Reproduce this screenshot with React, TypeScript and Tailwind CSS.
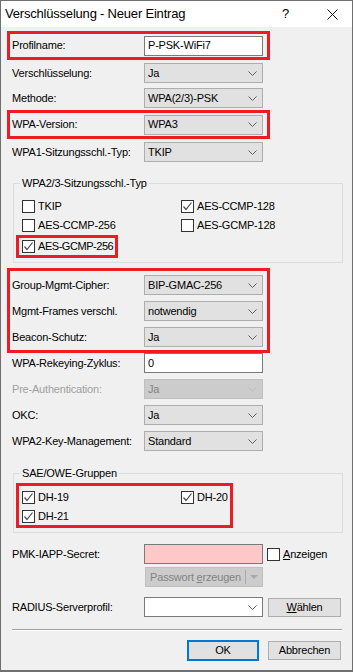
import React from 'react';

const RED = 'border-[3px] border-[#ec1c24]';
const NORED = 'border-[3px] border-transparent';

const Chevron = ({ disabled }: { disabled?: boolean }) => (
	<svg width="9" height="5" viewBox="0 0 9 5" className="shrink-0">
		<polyline points="0.5,0.5 4.5,4.5 8.5,0.5" fill="none" stroke={disabled ? '#bdbdbd' : '#606060'} strokeWidth="1" />
	</svg>
);

const Select = ({ value, disabled, white }: { value: string; disabled?: boolean; white?: boolean }) => (
	<div
		className={`w-[119px] h-[20px] flex items-center justify-between border pl-[3px] pr-[5px] ${
			disabled ? 'bg-[#cccccc] border-[#bfbfbf] text-[#838383]' : white ? 'bg-white border-[#7a7a7a]' : 'bg-[#e1e1e1] border-[#adadad]'
		}`}
	>
		<span>{value}</span>
		<Chevron disabled={disabled} />
	</div>
);

const Input = ({ value, pink }: { value?: string; pink?: boolean }) => (
	<div className={`w-[119px] h-[20px] flex items-center border border-[#7a7a7a] pl-[3px] ${pink ? 'bg-[#ffc8c8]' : 'bg-white'}`}>
		{value}
	</div>
);

const Check = ({ checked }: { checked?: boolean }) => (
	<div className="w-[13px] h-[13px] shrink-0 border border-[#333333] bg-white flex items-center justify-center">
		{checked && (
			<svg width="11" height="11" viewBox="0 0 11 11">
				<polyline points="1.5,5.5 4,8.5 9.5,1.5" fill="none" stroke="#4a4a4a" strokeWidth="1.2" />
			</svg>
		)}
	</div>
);

const CheckItem = ({ label, checked, tight }: { label: string; checked?: boolean; tight?: boolean }) => (
	<div className="flex items-center gap-[3px] whitespace-nowrap">
		<Check checked={checked} />
		<span className={tight ? 'tracking-[-0.45px]' : ''}>{label}</span>
	</div>
);

const Row = ({ label, children, disabled, h = 'h-[26px]' }: { label: string; children: React.ReactNode; disabled?: boolean; h?: string }) => (
	<div className={`flex items-center ${h}`}>
		<div className={`w-[134px] pl-[2px] ${disabled ? 'text-[#a0a0a0]' : ''}`}>{label}</div>
		{children}
	</div>
);

const Btn = ({ children, w = 'w-[73px]', primary }: { children: React.ReactNode; w?: string; primary?: boolean }) => (
	<div
		className={`${w} flex items-center justify-center bg-[#e1e1e1] ${
			primary ? 'h-[21px] border-2 border-[#0078d7]' : 'h-[19px] border border-[#adadad]'
		}`}
	>
		{children}
	</div>
);

export default function App() {
	return (
		<div className="w-[353px] h-[672px] overflow-hidden whitespace-nowrap border border-b-2 border-[#6f6f6f] bg-[#f0f0f0] font-['Liberation_Sans',Arial,sans-serif] text-[11px] text-black tracking-[-0.2px]">
			{/* Title bar */}
			<div className="h-[26px] bg-white flex items-center pl-[4px] text-[13px]">
				<span className="flex-1">Verschlüsselung - Neuer Eintrag</span>
				<span className="w-[45px] text-[13px]">?</span>
				<svg width="11" height="11" viewBox="0 0 11 11" className="mr-[14px]">
					<path d="M0.5 0.5 L10.5 10.5 M10.5 0.5 L0.5 10.5" stroke="#111" strokeWidth="1" />
				</svg>
			</div>

			<div className="pl-[6px] pt-[4px]">
				<div className={`w-[263px] ${RED}`}>
					<Row label="Profilname:" h="h-[23px]">
						<Input value="P-PSK-WiFi7" />
					</Row>
				</div>
				<div className={`w-[263px] ${NORED} border-y-0`}>
					<Row label="Verschlüsselung:">
						<Select value="Ja" />
					</Row>
					<Row label="Methode:" h="h-[24px]">
						<Select value="WPA(2/3)-PSK" />
					</Row>
				</div>
				<div className={`w-[263px] ${RED}`}>
					<Row label="WPA-Version:" h="h-[23px]">
						<Select value="WPA3" />
					</Row>
				</div>
				<div className={`w-[263px] ${NORED} border-y-0`}>
					<Row label="WPA1-Sitzungsschl.-Typ:">
						<Select value="TKIP" />
					</Row>
				</div>

				{/* WPA2/3 group */}
				<fieldset className="mt-[11px] ml-[6px] w-[330px] border border-[#dcdcdc] pb-[4px]">
					<legend className="ml-[6px] px-[2px] leading-[15px]">WPA2/3-Sitzungsschl.-Typ</legend>
					<div className="pt-[6px] pl-[8px]">
						<div className="flex items-center h-[19px]">
							<div className="w-[159px]">
								<CheckItem label="TKIP" />
							</div>
							<CheckItem label="AES-CCMP-128" checked />
						</div>
						<div className="flex items-center h-[19px]">
							<div className="w-[159px]">
								<CheckItem label="AES-CCMP-256" />
							</div>
							<CheckItem label="AES-GCMP-128" />
						</div>
					</div>
					<div className={`ml-[2px] w-[102px] ${RED} pl-[3px] h-[23px] flex items-center`}>
						<CheckItem label="AES-GCMP-256" checked tight />
					</div>
				</fieldset>

				<div className={`mt-[5px] w-[263px] ${RED} pt-[1px]`}>
					<Row label="Group-Mgmt-Cipher:">
						<Select value="BIP-GMAC-256" />
					</Row>
					<Row label="Mgmt-Frames verschl.">
						<Select value="notwendig" />
					</Row>
					<Row label="Beacon-Schutz:">
						<Select value="Ja" />
					</Row>
				</div>

				<div className={`w-[263px] ${NORED} border-y-0 flex flex-col gap-[6px]`}>
					<Row label="WPA-Rekeying-Zyklus:" h="h-[20px]">
						<Input value="0" />
					</Row>
					<Row label="Pre-Authentication:" h="h-[20px]" disabled>
						<Select value="Ja" disabled />
					</Row>
					<Row label="OKC:" h="h-[20px]">
						<Select value="Ja" />
					</Row>
					<Row label="WPA2-Key-Management:" h="h-[20px]">
						<Select value="Standard" />
					</Row>
				</div>

				{/* SAE/OWE group */}
				<fieldset className="mt-[15px] ml-[6px] w-[330px] border border-[#dcdcdc] pb-[4px]">
					<legend className="ml-[6px] px-[2px] leading-[15px]">SAE/OWE-Gruppen</legend>
					<div className={`mt-[2px] ml-[2px] w-[217px] ${RED} pl-[3px] pt-[2px]`}>
						<div className="flex items-center h-[19px]">
							<div className="w-[159px]">
								<CheckItem label="DH-19" checked />
							</div>
							<CheckItem label="DH-20" checked />
						</div>
						<div className="flex items-center h-[18px]">
							<CheckItem label="DH-21" checked />
						</div>
					</div>
				</fieldset>

				<div className={`mt-[11px] ${NORED} border-y-0`}>
					<Row label="PMK-IAPP-Secret:" h="h-[20px]">
						<Input pink />
						<div className="ml-[4px] flex items-center gap-[3px]">
							<Check />
							<span>
								<span className="underline">A</span>nzeigen
							</span>
						</div>
					</Row>
					<div className="mt-[3px] ml-[135px] w-[118px] h-[20px] flex items-center bg-[#cccccc] border border-[#bfbfbf] text-[#838383]">
						<span className="flex-1 text-center">
							Passwort <span className="underline">e</span>rzeugen
						</span>
						<div className="w-px h-[14px] bg-[#a8a8a8]" />
						<svg width="14" height="6" viewBox="0 0 14 6" className="mx-[1px]">
							<polygon points="3,1 11,1 7,5" fill="#a8a8a8" />
						</svg>
					</div>
					<div className="mt-[10px]">
						<Row label="RADIUS-Serverprofil:" h="h-[20px]">
							<Select value="" white />
							<div className="ml-[5px]">
								<Btn>
									<span className="underline">W</span>ählen
								</Btn>
							</div>
						</Row>
					</div>
				</div>

				<div className="mt-[12px] ml-[5px] w-[330px] h-[2px] border-t border-[#a0a0a0] border-b border-b-white" />

				<div className="mt-[9px] ml-[180px] flex items-start gap-[9px]">
					<Btn w="w-[72px]" primary>
						OK
					</Btn>
					<div className="mt-[1px]">
						<Btn>Abbrechen</Btn>
					</div>
				</div>
			</div>
		</div>
	);
}
